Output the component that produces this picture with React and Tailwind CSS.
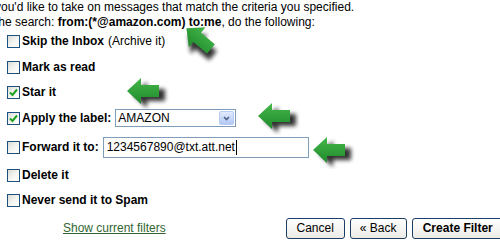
import React from 'react';

function Box({ checked }) {
  return (
    <span className="relative mr-[2px] inline-block h-[13px] w-[13px] shrink-0 border border-[#1c5180] bg-gradient-to-br from-[#dcdcd6] via-[#f4f4f0] to-white">
      {checked && (
        <svg className="absolute left-[1px] top-[1px]" width="9" height="9" viewBox="0 0 9 9">
          <path d="M1 4.5 L3.5 7 L8 1.5" fill="none" stroke="#21a121" strokeWidth="2" />
        </svg>
      )}
    </span>
  );
}

function Arrow({ className, rotate = 0 }) {
  return (
    <svg className={`absolute ${className}`} width="48" height="34" viewBox="0 0 48 34" style={{ transform: `rotate(${rotate}deg)` }}>
      <defs>
        <filter id={`sh${rotate}`} x="-20%" y="-20%" width="150%" height="160%">
          <feGaussianBlur stdDeviation="2" />
        </filter>
        <linearGradient id={`gr${rotate}`} x1="0" y1="0" x2="0" y2="1">
          <stop offset="0" stopColor="#45b74a" />
          <stop offset="1" stopColor="#1f8a2c" />
        </linearGradient>
      </defs>
      <path d="M4 16 L18 3 L18 10 L36 10 L36 22 L18 22 L18 29 Z" fill="#000" opacity="0.8" filter={`url(#sh${rotate})`} transform="translate(4 3)" />
      <path d="M2 15 L16 2 L16 9 L34 9 L34 21 L16 21 L16 28 Z" fill={`url(#gr${rotate})`} />
    </svg>
  );
}

function Row({ h, checked, label, extra, children }) {
  return (
    <div className={`flex items-center pl-[7px] ${h}`}>
      <Box checked={checked} />
      <span className="font-bold">{label}</span>
      {extra && <span className="ml-[4px]">{extra}</span>}
      {children}
    </div>
  );
}

export default function App() {
  return (
    <div className="relative h-[242px] w-[500px] overflow-hidden bg-white text-[12px] leading-[15px] text-black" style={{ fontFamily: '"Liberation Sans", Arial, sans-serif' }}>
      <div className="ml-[-5px] whitespace-nowrap">
        <div>you'd like to take on messages that match the criteria you specified.</div>
        <div>the search: <b>from:(*@amazon.com) to:me</b>, do the following:</div>
      </div>
      <Row h="h-[22px]" label="Skip the Inbox" extra="(Archive it)" />
      <Row h="h-[30px]" label="Mark as read" />
      <Row h="h-[21px]" checked label="Star it" />
      <Row h="h-[30px]" checked label="Apply the label:">
        <div className="ml-[4px] flex h-[18px] w-[121px] items-center border border-[#7f9db9] bg-white pl-[2px]">
          <span className="flex-1">AMAZON</span>
          <span className="mr-[1px] flex h-[14px] w-[15px] items-center justify-center rounded-[2px] border border-[#b9cbf3] bg-gradient-to-b from-[#e1eafe] to-[#b3c8f5]">
            <svg width="7" height="5" viewBox="0 0 7 5">
              <path d="M1 1 L3.5 3.5 L6 1" fill="none" stroke="#4d6185" strokeWidth="1.6" />
            </svg>
          </span>
        </div>
      </Row>
      <Row h="h-[28px]" label="Forward it to:">
        <div className="ml-[4px] flex h-[21px] w-[206px] items-center border border-[#7f9db9] bg-white pl-[3px]">
          <span>1234567890@txt.att.net</span>
          <span className="ml-[1px] h-[15px] w-[1px] bg-black" />
        </div>
      </Row>
      <Row h="h-[28px]" label="Delete it" />
      <Row h="h-[22px]" label="Never send it to Spam" />
      <div className="mt-[7px] flex items-center">
        <a className="ml-[63px] w-[104px] whitespace-nowrap text-[#336633] underline" href="#">Show current filters</a>
        <div className="ml-[120px] flex gap-[5px]">
          <button className="h-[21px] w-[59px] rounded-[3px] border border-[#1c3f66] bg-gradient-to-b from-white to-[#ecebe6]">Cancel</button>
          <button className="h-[21px] w-[57px] rounded-[3px] border border-[#1c3f66] bg-gradient-to-b from-white to-[#ecebe6]">« Back</button>
          <button className="h-[21px] w-[100px] shrink-0 whitespace-nowrap rounded-[3px] border border-[#1c3f66] bg-gradient-to-b from-white to-[#ecebe6] pl-[10px] text-left font-bold">Create Filter</button>
        </div>
      </div>
      <Arrow className="left-[178px] top-[27px]" rotate={40} />
      <Arrow className="left-[125px] top-[76px]" />
      <Arrow className="left-[256px] top-[101px]" />
      <Arrow className="left-[311px] top-[135px]" />
    </div>
  );
}
